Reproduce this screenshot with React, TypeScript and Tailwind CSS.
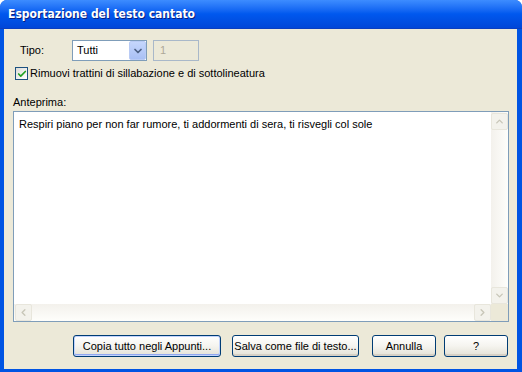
import { Check, ChevronDown, ChevronUp, ChevronLeft, ChevronRight } from "lucide-react"

const ui = { fontFamily: '"Liberation Sans", Arial, sans-serif' }

function ScrollButton({ children }: { children: React.ReactNode }) {
  return (
    <div className="w-[17px] h-[17px] flex items-center justify-center rounded-[2px] border border-[#e8e6dc] bg-[#f3f2ec] text-[#c8c6b8]">
      {children}
    </div>
  )
}

function XpButton({ label, className, isDefault }: { label: string; className: string; isDefault?: boolean }) {
  return (
    <button
      className={`${className} h-[22px] whitespace-nowrap rounded-[3px] border border-[#003c74] bg-gradient-to-b from-white via-[#f5f4ef] to-[#e3e1d6] text-[11px] text-black flex items-center justify-center ${
        isDefault ? "shadow-[inset_0_0_0_1px_#c2d3fc,inset_0_-1px_0_1px_#91a7f0]" : "shadow-[inset_0_-2px_0_#d6d0c5]"
      }`}
    >
      {label}
    </button>
  )
}

export default function App() {
  return (
    <div className="w-[522px] h-[372px] flex flex-col bg-[#0054e3] overflow-hidden rounded-t-[7px]" style={ui}>
      {/* Title bar */}
      <div className="h-[29px] shrink-0 flex items-center pl-[8px] bg-gradient-to-b from-[#3d8cff] via-[#0058ee] to-[#0046d8] border-b border-[#0a3ec0]">
        <span
          className="text-white font-bold text-[12px] [text-shadow:1px_1px_0_#0a1f80]"
          style={{ fontFamily: '"DejaVu Sans Condensed", "DejaVu Sans", sans-serif' }}
        >
          Esportazione del testo cantato
        </span>
      </div>

      {/* Client area */}
      <div className="flex-1 ml-[4px] mr-[5px] mb-[3px] bg-[#ece9d8] flex flex-col px-[9px] text-[11px] text-black">
        <div className="flex items-center mt-[11px] h-[21px]">
          <span className="w-[59px] pl-[7px]">Tipo:</span>
          <div className="w-[75px] h-[21px] border border-[#7f9db9] bg-white flex items-center">
            <span className="flex-1 pl-[4px]">Tutti</span>
            <div className="w-[17px] h-[19px] rounded-[2px] bg-gradient-to-b from-[#c5d6fc] to-[#a9c0f4] border border-[#b9cbf5] flex items-center justify-center text-[#4d6185]">
              <ChevronDown size={12} strokeWidth={3.5} />
            </div>
          </div>
          <div className="ml-[6px] w-[46px] h-[21px] border border-[#a9b8c9] bg-[#ece9d8] flex items-center pl-[6px] text-[#aca899]">
            1
          </div>
        </div>

        <label className="flex items-center mt-[6px] h-[13px] pl-[2px]">
          <div className="w-[13px] h-[13px] border border-[#1c5180] bg-gradient-to-br from-[#dcdcd7] to-white flex items-center justify-center text-[#21a121]">
            <Check size={10} strokeWidth={4} />
          </div>
          <span className="ml-[2px]">Rimuovi trattini di sillabazione e di sottolineatura</span>
        </label>

        <div className="mt-[16px] leading-[13px]">Anteprima:</div>

        <div className="mt-[2px] w-[496px] h-[211px] border border-[#7f9db9] bg-white flex flex-col">
          <div className="flex-1 flex min-h-0">
            <div className="flex-1 pl-[5px] pt-[4px]">
              Respiri piano per non far rumore, ti addormenti di sera, ti risvegli col sole
            </div>
            <div className="w-[17px] flex flex-col bg-gradient-to-r from-[#f3f1ec] to-[#fefefb] pt-[1px]">
              <ScrollButton>
                <ChevronUp size={11} strokeWidth={3} />
              </ScrollButton>
              <div className="flex-1" />
              <ScrollButton>
                <ChevronDown size={11} strokeWidth={3} />
              </ScrollButton>
            </div>
          </div>
          <div className="h-[17px] flex bg-gradient-to-b from-[#f3f1ec] to-[#fefefb]">
            <div className="pl-[1px]">
              <ScrollButton>
                <ChevronLeft size={11} strokeWidth={3} />
              </ScrollButton>
            </div>
            <div className="flex-1" />
            <ScrollButton>
              <ChevronRight size={11} strokeWidth={3} />
            </ScrollButton>
            <div className="w-[17px] bg-[#ece9d8]" />
          </div>
        </div>

        <div className="flex mt-[13px] pl-[60px]">
          <XpButton label="Copia tutto negli Appunti..." className="w-[148px]" isDefault />
          <XpButton label="Salva come file di testo..." className="w-[127px] ml-[11px]" />
          <XpButton label="Annulla" className="w-[64px] ml-[13px]" />
          <XpButton label="?" className="w-[64px] ml-[8px]" />
        </div>
      </div>
    </div>
  )
}
